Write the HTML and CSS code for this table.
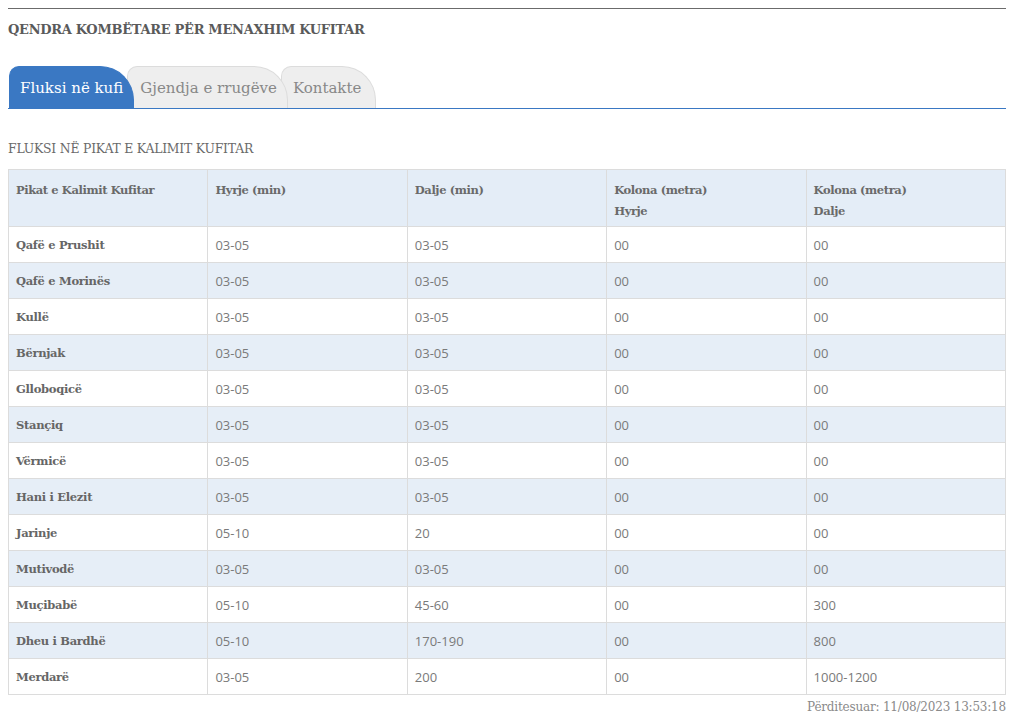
FILE: index.html
```html
<!DOCTYPE html>
<html lang="sq">
<head>
<meta charset="utf-8">
<title>Fluksi në kufi</title>
<link rel="stylesheet" href="styles.css">
</head>
<body>
<div class="page">
  <h1 class="title">QENDRA KOMBËTARE PËR MENAXHIM KUFITAR</h1>
  <nav class="tabs">
    <a class="tab active">Fluksi në kufi</a>
    <a class="tab">Gjendja e rrugëve</a>
    <a class="tab">Kontakte</a>
  </nav>
  <h2 class="section">FLUKSI NË PIKAT E KALIMIT KUFITAR</h2>
  <table class="flux">
    <thead>
      <tr>
        <th>Pikat e Kalimit Kufitar</th>
        <th>Hyrje (min)</th>
        <th>Dalje (min)</th>
        <th>Kolona (metra)<br>Hyrje</th>
        <th>Kolona (metra)<br>Dalje</th>
      </tr>
    </thead>
    <tbody>
      <tr><th>Qafë e Prushit</th><td>03-05</td><td>03-05</td><td>00</td><td>00</td></tr>
      <tr><th>Qafë e Morinës</th><td>03-05</td><td>03-05</td><td>00</td><td>00</td></tr>
      <tr><th>Kullë</th><td>03-05</td><td>03-05</td><td>00</td><td>00</td></tr>
      <tr><th>Bërnjak</th><td>03-05</td><td>03-05</td><td>00</td><td>00</td></tr>
      <tr><th>Glloboqicë</th><td>03-05</td><td>03-05</td><td>00</td><td>00</td></tr>
      <tr><th>Stançiq</th><td>03-05</td><td>03-05</td><td>00</td><td>00</td></tr>
      <tr><th>Vërmicë</th><td>03-05</td><td>03-05</td><td>00</td><td>00</td></tr>
      <tr><th>Hani i Elezit</th><td>03-05</td><td>03-05</td><td>00</td><td>00</td></tr>
      <tr><th>Jarinje</th><td>05-10</td><td>20</td><td>00</td><td>00</td></tr>
      <tr><th>Mutivodë</th><td>03-05</td><td>03-05</td><td>00</td><td>00</td></tr>
      <tr><th>Muçibabë</th><td>05-10</td><td>45-60</td><td>00</td><td>300</td></tr>
      <tr><th>Dheu i Bardhë</th><td>05-10</td><td>170-190</td><td>00</td><td>800</td></tr>
      <tr><th>Merdarë</th><td>03-05</td><td>200</td><td>00</td><td>1000-1200</td></tr>
    </tbody>
  </table>
  <p class="updated">Përditesuar: 11/08/2023 13:53:18</p>
</div>
</body>
</html>
```
FILE: styles.css
```css
html, body {
  margin: 0;
  padding: 0;
  background: #fff;
}
body {
  font-family: "DejaVu Serif", "Liberation Serif", serif;
  color: #666;
}
.page {
  margin: 8px 8px 0 8px;
  border-top: 1px solid #6b6b6b;
}
.title {
  margin: 12px 0 0 0;
  font-size: 13px;
  line-height: 18px;
  font-weight: bold;
  color: #5a5a5a;
  letter-spacing: -0.3px;
}
.tabs {
  display: flex;
  margin-top: 27px;
  padding-left: 1px;
  border-bottom: 1px solid #3a78c3;
  height: 42px;
  align-items: flex-end;
}
.tab {
  display: flex;
  align-items: center;
  height: 42px;
  box-sizing: border-box;
  padding: 0 10px 0 10px;
  font-size: 15px;
  color: #888;
  background: #eeeeee;
  border: 1px solid #dcdcdc;
  border-bottom: none;
  border-radius: 10px 34px 0 0;
  margin-right: -7px;
  position: relative;
}
.tab:nth-child(2) { z-index: 2; padding-left: 12px; }
.tab:nth-child(3) { z-index: 1; padding-left: 11px; padding-right: 14px; }
.tab.active {
  background: #3a78c3;
  border-color: #3a78c3;
  color: #fff;
  z-index: 3;
  padding-right: 10px;
}
.section {
  margin: 32px 0 0 0;
  font-size: 12.4px;
  line-height: 16px;
  font-weight: normal;
  color: #6a6a6a;
  letter-spacing: -0.2px;
}
.flux {
  margin-top: 12px;
  width: 100%;
  border-collapse: collapse;
  table-layout: fixed;
}
.flux th, .flux td {
  border: 1px solid #dcdcdc;
  text-align: left;
  padding: 0 7px;
  height: 35px;
  vertical-align: middle;
}
.flux thead th {
  background: #e4edf7;
  vertical-align: top;
  padding-top: 10px;
  padding-bottom: 4px;
  height: auto;
  font-size: 11.5px;
  line-height: 21px;
  font-weight: bold;
  color: #6a6a6a;
  letter-spacing: -0.4px;
}
.flux thead tr { height: 57px; }
.flux tbody th {
  font-size: 11.5px;
  font-weight: bold;
  color: #666;
  letter-spacing: -0.3px;
}
.flux td {
  font-family: "Open Sans", "DejaVu Sans", sans-serif;
  font-size: 13px;
  color: #7a7a7a;
  font-weight: normal;
}
.flux tbody tr:nth-child(even) { background: #e6eef7; }
.flux tbody tr:nth-child(odd) { background: #fff; }
.updated {
  margin: 4px 0 0 0;
  text-align: right;
  font-size: 12px;
  line-height: 16px;
  color: #8a8a8a;
  letter-spacing: -0.2px;
}
```
